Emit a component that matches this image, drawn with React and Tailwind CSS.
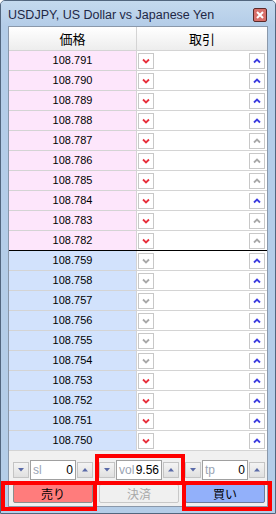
import React from "react";

const RED = "#e8303c";
const BLUE = "#3c3ce0";
const GRAY = "#a8a8a8";

function Chevron({ dir, color }) {
  return (
    <div className="w-[16px] h-[16px] border border-[#c8c8c8] bg-white flex items-center justify-center">
      <svg width="8" height="6" viewBox="0 0 8 6">
        {dir === "down" ? (
          <path d="M1 1.5 L4 4.5 L7 1.5" fill="none" stroke={color} strokeWidth="1.8" />
        ) : (
          <path d="M1 4.5 L4 1.5 L7 4.5" fill="none" stroke={color} strokeWidth="1.8" />
        )}
      </svg>
    </div>
  );
}

function Row({ price, bg, down, up, last }) {
  return (
    <div
      className={`grid grid-cols-[128px_1fr] h-[20px] border-b ${
        last ? "border-black" : "border-[#d4d4d4]"
      }`}
    >
      <div
        className={`${bg} border-r border-[#d4d4d4] flex items-center justify-center text-[11px] text-black`}
        style={{ fontFamily: "'Liberation Sans', Arial, sans-serif" }}
      >
        {price}
      </div>
      <div className="bg-white flex items-center justify-between pl-[1px] pr-[2px]">
        <Chevron dir="down" color={down} />
        <Chevron dir="up" color={up} />
      </div>
    </div>
  );
}

function SpinBtn({ dir }) {
  return (
    <div className="w-[16px] h-[16px] border border-[#c4c4c4] bg-gradient-to-b from-[#f4f4f4] to-[#e0e0e0] flex items-center justify-center">
      <svg width="6" height="4" viewBox="0 0 6 4">
        {dir === "down" ? (
          <path d="M0 0 L6 0 L3 3.5 Z" fill="#5a6aa8" />
        ) : (
          <path d="M0 3.5 L6 3.5 L3 0 Z" fill="#5a6aa8" />
        )}
      </svg>
    </div>
  );
}

function Spin({ label, value }) {
  return (
    <div className="flex items-center gap-[1px]">
      <SpinBtn dir="down" />
      <div className="w-[46px] h-[20px] bg-white border border-[#a0a0a0] flex items-center justify-between px-[2px] text-[12px]">
        <span className="text-[#9aa4b4]">{label}</span>
        <span className="text-black">{value}</span>
      </div>
      <SpinBtn dir="up" />
    </div>
  );
}

export default function App() {
  const pink = ["108.791", "108.790", "108.789", "108.788", "108.787", "108.786", "108.785", "108.784", "108.783", "108.782"];
  const pinkUp = [BLUE, BLUE, BLUE, BLUE, GRAY, GRAY, GRAY, BLUE, GRAY, GRAY];
  const blue = ["108.759", "108.758", "108.757", "108.756", "108.755", "108.754", "108.753", "108.752", "108.751", "108.750"];
  const blueDown = [GRAY, GRAY, GRAY, GRAY, GRAY, GRAY, RED, RED, RED, RED];

  return (
    <div
      className="relative w-[276px] h-[514px] bg-[#b4cde8] border border-[#52667e] rounded-t-[5px] flex flex-col overflow-hidden"
      style={{ fontFamily: "'Liberation Sans', 'Noto Sans CJK JP', sans-serif" }}
    >
      <div className="h-[25px] shrink-0 flex items-center justify-between pl-[7px] pr-[8px] bg-gradient-to-b from-[#c4d9ee] to-[#b4cde8]">
        <span className="text-[12.5px] text-[#1e2846] mt-[4px]">USDJPY, US Dollar vs Japanese Yen</span>
        <div className="w-[14px] h-[14px] mt-[3px] rounded-[2px] border border-[#5a2a2a] bg-[#d8706a] flex items-center justify-center">
          <svg width="8" height="8" viewBox="0 0 8 8">
            <path d="M1 1 L7 7 M7 1 L1 7" stroke="white" strokeWidth="2" />
          </svg>
        </div>
      </div>
      <div className="mx-[7px] flex-1 border border-[#8a98aa] bg-[#f0f0f0] flex flex-col">
        <div
          className="grid grid-cols-[128px_1fr] h-[24px] border-b border-[#d4d4d4] bg-gradient-to-b from-white to-[#ededed] text-[13px] text-black"
          style={{ fontFamily: "'Noto Sans CJK JP', sans-serif" }}
        >
          <div className="border-r border-[#d4d4d4] flex items-center justify-center">価格</div>
          <div className="flex items-center justify-center">取引</div>
        </div>
        {pink.map((p, i) => (
          <Row key={p} price={p} bg="bg-[#fde6fb]" down={RED} up={pinkUp[i]} last={i === 9} />
        ))}
        {blue.map((p, i) => (
          <Row key={p} price={p} bg="bg-[#d2e2fc]" down={blueDown[i]} up={BLUE} />
        ))}
        <div className="flex-1 flex flex-col px-[4px] pt-[9px]">
          <div className="grid grid-cols-[80px_80px_80px] gap-x-[6px]">
            <Spin label="sl" value="0" />
            <Spin label="vol" value="9.56" />
            <Spin label="tp" value="0" />
          </div>
          <div
            className="grid grid-cols-[80px_80px_80px] gap-x-[6px] mt-[4px] text-[12px]"
            style={{ fontFamily: "'Noto Sans CJK JP', sans-serif" }}
          >
            <div className="h-[19px] border border-[#8c8c8c] rounded-[2px] bg-[#ff7c7c] flex items-center justify-center text-black">売り</div>
            <div className="h-[19px] border border-[#c8c8c8] rounded-[2px] bg-[#f0f0f0] flex items-center justify-center text-[#a8a8a8]">決済</div>
            <div className="h-[19px] border border-[#6c7c9c] rounded-[2px] bg-[#92b0fa] flex items-center justify-center text-black">買い</div>
          </div>
        </div>
      </div>
      <div className="h-[6px] shrink-0" />
      <div className="absolute left-[94px] top-[453px] w-[90px] h-[31px] border-[4px] border-[#ff0000]" />
      <div className="absolute left-[0px] top-[480px] w-[96px] h-[30px] border-[4px] border-[#ff0000]" />
      <div className="absolute left-[181px] top-[480px] w-[90px] h-[30px] border-[4px] border-[#ff0000]" />
    </div>
  );
}
